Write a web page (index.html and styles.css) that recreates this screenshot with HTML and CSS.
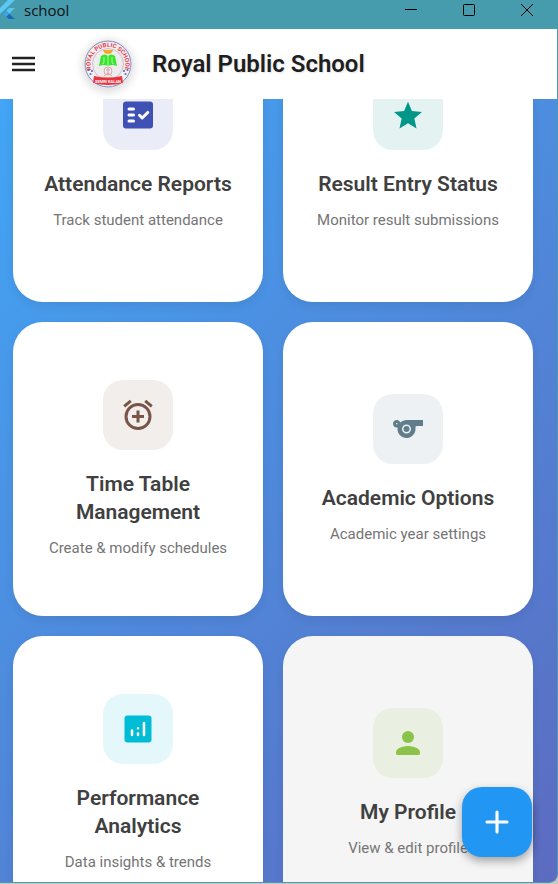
FILE: index.html
```html
<!DOCTYPE html>
<html lang="en">
<head>
<meta charset="utf-8">
<meta name="viewport" content="width=device-width, initial-scale=1">
<title>school</title>
<link rel="stylesheet" href="styles.css">
</head>
<body>
<div class="window">
  <header class="titlebar">
    <svg class="app-icon" viewBox="0 0 16 20" aria-hidden="true">
      <path d="M0 8 8 0h7L0 14z" fill="#5bc8f5"/>
      <path d="M3 14l6-6h6l-6 6z" fill="#55c5f4"/>
      <path d="M3 14l3-3 9 8H9z" fill="#1968b3"/>
      <path d="M3 14l3-3 3 3-3 3z" fill="#41a5e8"/>
    </svg>
    <span class="window-name">school</span>
    <div class="window-controls">
      <button type="button" aria-label="Minimize"><svg viewBox="0 0 14 14"><path d="M1 6.500h12"/></svg></button>
      <button type="button" aria-label="Maximize"><svg viewBox="0 0 14 14"><rect x="1.500" y="1.500" width="11" height="11" rx="1"/></svg></button>
      <button type="button" aria-label="Close"><svg viewBox="0 0 14 14"><path d="M1 1l12 12M13 1 1 13"/></svg></button>
    </div>
  </header>
  <div class="client">
    <div class="appbar">
      <button type="button" class="menu" aria-label="Open menu"><svg viewBox="0 0 24 16"><path d="M1 2h23M1 8h23M1 14h23"/></svg></button>
      <svg class="logo" viewBox="0 0 48 48" role="img" aria-label="Royal Public School crest">
        <defs><path id="ring" d="M9 33.500A17.500 17.500 0 1 1 39 33.500"/></defs>
        <circle cx="24" cy="24" r="23" fill="#f1eff1" stroke="#7c88bd" stroke-width="1"/>
        <circle cx="24" cy="24" r="15.500" fill="#ededed" stroke="#c9a6bd" stroke-width=".7"/>
        <text class="ring-text"><textPath href="#ring" startOffset="50%">ROYAL PUBLIC SCHOOL</textPath></text>
        <path d="M19 10h10q-1 4-5 4t-5-4z" fill="#f4a628"/>
        <path d="M17 16q4-3 7 0 3-3 7 0l2 10q-5-2-9 0-4-2-9 0z" fill="#35e52b"/>
        <path d="M24 16v10M20 17v5q0 2-2 2M28 17v5q0 2 2 2" fill="none" stroke="#b7f5a5"/>
        <g fill="none" stroke="#dba6ad" stroke-width="1"><circle cx="24" cy="31" r="4"/><path d="M22 30h4M24 28v7M20 36l4-3 4 3"/></g>
        <g fill="#5364b5"><circle cx="4.500" cy="30" r="1"/><circle cx="8" cy="31" r="1"/><circle cx="6.500" cy="34" r="1"/><circle cx="43.500" cy="30" r="1"/><circle cx="40" cy="31" r="1"/><circle cx="41.500" cy="34" r="1"/></g>
        <path d="M10 36q14 3 28 0l1 7q-15 4-30 0z" fill="#e9333f"/>
        <text class="ribbon-text" x="24" y="43">SEMRI KALAN</text>
      </svg>
      <h1>Royal Public School</h1>
    </div>
    <main class="board">
      <div class="grid">
        <a class="card indigo" href="#attendance">
          <span class="tile"><svg viewBox="0 0 24 24"><rect x="2" y="3" width="20" height="18" rx="2"/><path class="cut" d="M6 8h3M6 12h3M6 16h3M13 12.200l1.800 1.800 3.700-3.700"/></svg></span>
          <h2>Attendance Reports</h2><p>Track student attendance</p>
        </a>
        <a class="card teal" href="#results">
          <span class="tile"><svg viewBox="0 0 24 24"><path d="M12 17.500 17.700 21l-1.500-6.600L21.300 10l-6.700-.6L12 3.100 9.400 9.400 2.700 10l5.100 4.400L6.300 21z"/></svg></span>
          <h2>Result Entry Status</h2><p>Monitor result submissions</p>
        </a>
        <a class="card brown" href="#timetable">
          <span class="tile"><svg viewBox="0 0 24 24"><path class="line" d="M2.800 6.300 7.200 2.600M21.200 6.300 16.800 2.600M12 9v8M8 13h8"/><circle class="line" cx="12" cy="13" r="8"/></svg></span>
          <h2>Time Table Management</h2><p>Create &amp; modify schedules</p>
        </a>
        <a class="card slate" href="#academic">
          <span class="tile"><svg viewBox="0 0 24 24"><path fill-rule="evenodd" d="M11.230 6c-1.660 0-3.220.66-4.360 1.730C6.540 6.730 5.610 6 4.500 6 3.120 6 2 7.120 2 8.500S3.120 11 4.500 11c.21 0 .41-.03.61-.08-.05.25-.09.51-.1.78-.18 3.680 2.950 6.680 6.680 6.270 2.550-.28 4.680-2.260 5.190-4.770.15-.71.15-1.400.06-2.060-.09-.6.38-1.130.99-1.130H22V6zM4.500 9a.5.5 0 1 1 0-1 .5.5 0 0 1 0 1zM11 15a3 3 0 1 1 0-6 3 3 0 0 1 0 6z"/><circle cx="11" cy="12" r="2"/></svg></span>
          <h2>Academic Options</h2><p>Academic year settings</p>
        </a>
        <a class="card cyan" href="#analytics">
          <span class="tile"><svg viewBox="0 0 24 24"><rect x="3" y="3" width="18" height="18" rx="2"/><path class="cut bars" d="M8 13v3M12 16v-1M12 11.500v0M16 8v8"/></svg></span>
          <h2>Performance Analytics</h2><p>Data insights &amp; trends</p>
        </a>
        <a class="card lime hovered" href="#profile">
          <span class="tile"><svg viewBox="0 0 24 24"><circle cx="12" cy="8" r="4"/><path d="M12 14c-2.670 0-8 1.340-8 4v1q0 1 1 1h14q1 0 1-1v-1c0-2.660-5.330-4-8-4z"/></svg></span>
          <h2>My Profile</h2><p>View &amp; edit profile</p>
        </a>
      </div>
    </main>
    <button type="button" class="fab" aria-label="Add"><svg viewBox="0 0 24 24"><path d="M12 4v16M4 12h16"/></svg></button>
  </div>
</div>
</body>
</html>
```
FILE: styles.css
```css
* { box-sizing: border-box; }

body {
  margin: 0;
  background: #c5c8ca;
  font-family: Roboto, "Liberation Sans", sans-serif;
}

h1, h2, p { margin: 0; }

button {
  display: flex;
  align-items: center;
  justify-content: center;
  padding: 0;
  border: 0;
  background: none;
}

.window {
  display: flex;
  flex-direction: column;
  height: calc(100vh - 1px);
  border: solid #469bad;
  border-width: 0 1px 1px 0;
  border-radius: 0 0 9px 0;
  background: #469bad;
  overflow: hidden;
}

.titlebar {
  display: flex;
  flex: none;
  align-items: flex-start;
  height: 29px;
  color: #111;
}

.app-icon { width: 16px; height: 20px; }

.window-name {
  margin-left: 8px;
  font: 15px/20px "Open Sans", "Noto Sans", sans-serif;
}

.window-controls {
  display: flex;
  gap: 44px;
  margin: 3px 23px 0 auto;
}

.window-controls svg {
  display: block;
  width: 14px;
  height: 14px;
  fill: none;
  stroke: #000;
}

.client {
  position: relative;
  display: flex;
  flex: 1;
  flex-direction: column;
  min-height: 0;
}

.appbar {
  display: flex;
  flex: none;
  align-items: center;
  height: 70px;
  padding-left: 11px;
  background: #fff;
}

.menu svg {
  width: 24px;
  height: 16px;
  fill: none;
  stroke: #222;
  stroke-width: 2.400;
}

.logo {
  width: 48px;
  height: 48px;
  margin: 0 20px 0 49px;
  border-radius: 50%;
  background: #eee;
  box-shadow: 0 2px 8px 2px rgba(0, 0, 0, .14);
}

.ring-text {
  fill: #e63b49;
  font-size: 6px;
  font-weight: 700;
  text-anchor: middle;
}

.ribbon-text {
  fill: #fff;
  font-size: 4px;
  font-weight: 700;
  text-anchor: middle;
}

h1 {
  color: #1f1f1f;
  font-size: 24px;
  font-weight: 600;
  line-height: 32px;
  text-shadow: 1px 1px 2px rgba(0, 0, 0, .12);
}

.board {
  flex: 1;
  min-height: 0;
  padding: 0 24px 0 13px;
  background: linear-gradient(135deg, #42a5f5, #5c6bc0);
  overflow: hidden;
}

.grid {
  display: grid;
  grid-template-columns: 1fr 1fr;
  gap: 20px;
  margin-top: -91px;
}

.card {
  display: flex;
  flex-direction: column;
  align-items: center;
  justify-content: center;
  aspect-ratio: 250 / 294;
  padding: 0 24px;
  border-radius: 30px;
  background: #fff;
  box-shadow: 0 4px 10px rgba(0, 0, 0, .07);
  text-align: center;
  text-decoration: none;
}

.hovered { background: #f5f5f5; }

.tile {
  display: flex;
  align-items: center;
  justify-content: center;
  width: 70px;
  height: 70px;
  margin-bottom: 20px;
  border-radius: 20px;
}

.tile svg { width: 36px; height: 36px; fill: currentColor; }

.tile .cut {
  fill: none;
  stroke: #fff;
  stroke-width: 2;
  stroke-linecap: round;
  stroke-linejoin: round;
}

.tile .bars { stroke-width: 1.700; }

.tile .line { fill: none; stroke: currentColor; stroke-width: 2; }

.indigo .tile { background: #eaedf7; color: #3f51b5; }
.teal .tile { background: #e4f3f2; color: #009688; }
.brown .tile { background: #f1eeec; color: #795548; }
.slate .tile { background: #edf1f3; color: #607d8b; }
.cyan .tile { background: #e4f7fb; color: #00bcd4; }
.lime .tile { background: #e9f0e1; color: #8bc34a; }

h2 {
  margin-bottom: 12px;
  color: #404040;
  font-size: 21px;
  font-weight: 600;
  line-height: 28px;
}

.card p {
  color: #757575;
  font-size: 15px;
  line-height: 20px;
  white-space: nowrap;
}

.fab {
  position: absolute;
  right: 25px;
  bottom: 25px;
  width: 70px;
  height: 70px;
  border-radius: 20px;
  background: #2196f3;
  box-shadow: 0 4px 10px rgba(0, 0, 0, .35);
}

.fab svg {
  width: 30px;
  height: 30px;
  fill: none;
  stroke: #fff;
  stroke-width: 2.500;
  stroke-linecap: round;
}
```
